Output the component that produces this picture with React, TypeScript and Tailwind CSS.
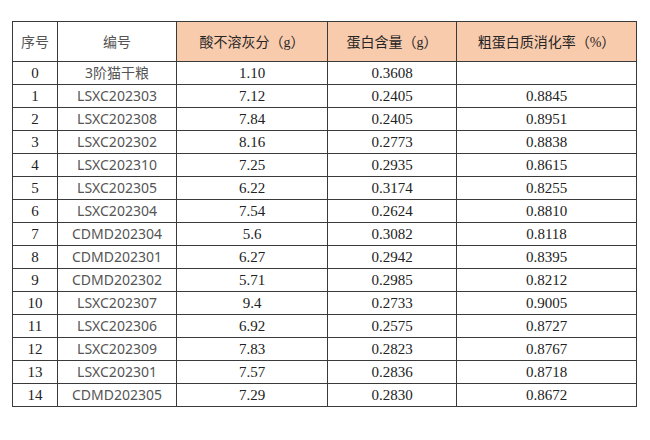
type Row = {
  idx: string;
  code: string;
  ash: string;
  protein: string;
  digest: string;
};

const rows: Row[] = [
  { idx: '0', code: '3阶猫干粮', ash: '1.10', protein: '0.3608', digest: '' },
  { idx: '1', code: 'LSXC202303', ash: '7.12', protein: '0.2405', digest: '0.8845' },
  { idx: '2', code: 'LSXC202308', ash: '7.84', protein: '0.2405', digest: '0.8951' },
  { idx: '3', code: 'LSXC202302', ash: '8.16', protein: '0.2773', digest: '0.8838' },
  { idx: '4', code: 'LSXC202310', ash: '7.25', protein: '0.2935', digest: '0.8615' },
  { idx: '5', code: 'LSXC202305', ash: '6.22', protein: '0.3174', digest: '0.8255' },
  { idx: '6', code: 'LSXC202304', ash: '7.54', protein: '0.2624', digest: '0.8810' },
  { idx: '7', code: 'CDMD202304', ash: '5.6', protein: '0.3082', digest: '0.8118' },
  { idx: '8', code: 'CDMD202301', ash: '6.27', protein: '0.2942', digest: '0.8395' },
  { idx: '9', code: 'CDMD202302', ash: '5.71', protein: '0.2985', digest: '0.8212' },
  { idx: '10', code: 'LSXC202307', ash: '9.4', protein: '0.2733', digest: '0.9005' },
  { idx: '11', code: 'LSXC202306', ash: '6.92', protein: '0.2575', digest: '0.8727' },
  { idx: '12', code: 'LSXC202309', ash: '7.83', protein: '0.2823', digest: '0.8767' },
  { idx: '13', code: 'LSXC202301', ash: '7.57', protein: '0.2836', digest: '0.8718' },
  { idx: '14', code: 'CDMD202305', ash: '7.29', protein: '0.2830', digest: '0.8672' },
];

const serif = "font-['Liberation_Serif','Noto_Sans_CJK_SC',serif]";
const sans = "font-['Noto_Sans','Noto_Sans_CJK_SC',sans-serif]";
const cjk = "font-['Noto_Sans_CJK_SC',sans-serif]";

const cell = 'border border-[#3a3a3a] p-0 text-center align-middle';

export default function App() {
  return (
    <div className="h-[440px] w-[650px] bg-white pl-[12px] pt-[21px]">
      <table className="w-[624px] table-fixed border-collapse">
        <colgroup>
          <col className="w-[45px]" />
          <col className="w-[119px]" />
          <col className="w-[151px]" />
          <col className="w-[129px]" />
          <col className="w-[180px]" />
        </colgroup>
        <thead>
          <tr className="h-[40px]">
            <th className={`${cell} ${cjk} text-[14px] font-normal text-[#555]`}>序号</th>
            <th className={`${cell} ${cjk} text-[14px] font-normal text-[#555]`}>编号</th>
            <th className={`${cell} ${cjk} bg-[#f8cbad] text-[14px] font-normal text-[#262626]`}>
              酸不溶灰分（<span className={serif}>g</span>）
            </th>
            <th className={`${cell} ${cjk} bg-[#f8cbad] text-[14px] font-normal text-[#262626]`}>
              蛋白含量（<span className={serif}>g</span>）
            </th>
            <th className={`${cell} ${cjk} bg-[#f8cbad] text-[14px] font-normal text-[#262626]`}>
              粗蛋白质消化率（<span className={serif}>%</span>）
            </th>
          </tr>
        </thead>
        <tbody>
          {rows.map((r) => (
            <tr key={r.idx} className="h-[23px] leading-[20px]">
              <td className={`${cell} ${serif} text-[15px] text-[#222]`}>{r.idx}</td>
              <td className={`${cell} ${sans} text-[14px] text-[#555]`}>{r.code}</td>
              <td className={`${cell} ${serif} text-[15px] text-[#222]`}>{r.ash}</td>
              <td className={`${cell} ${serif} text-[15px] text-[#222]`}>{r.protein}</td>
              <td className={`${cell} ${serif} text-[15px] text-[#222]`}>{r.digest}</td>
            </tr>
          ))}
        </tbody>
      </table>
    </div>
  );
}
